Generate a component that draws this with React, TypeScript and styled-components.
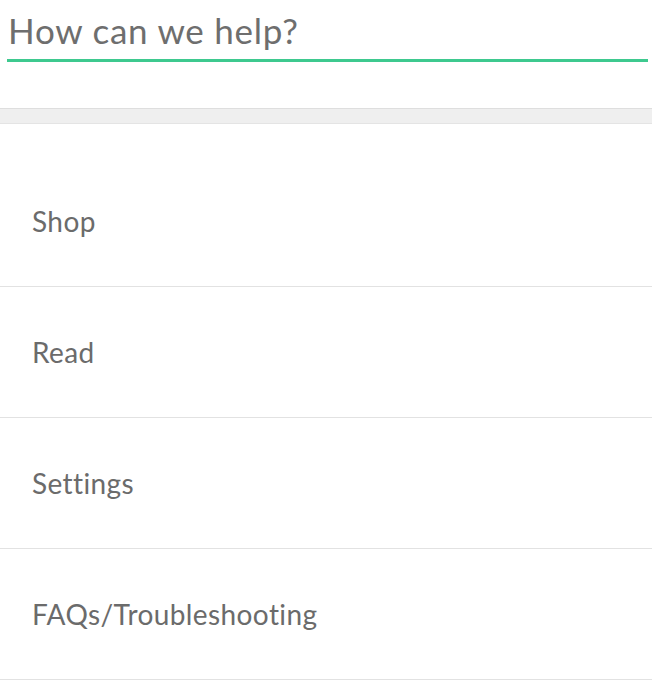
import React from "react";
import styled, { createGlobalStyle } from "styled-components";

const Global = createGlobalStyle`
  html, body { margin: 0; padding: 0; background: #ffffff; }
  body { font-family: Lato, "Open Sans", sans-serif; }
`;

const Page = styled.div`
  width: 652px;
  display: flex;
  flex-direction: column;
`;

const SearchBar = styled.div`
  padding: 10px 4px 0 7px;
  height: 108px;
  box-sizing: border-box;
`;

const SearchInput = styled.input`
  display: block;
  width: 100%;
  box-sizing: border-box;
  border: none;
  border-bottom: 3px solid #3ec98f;
  outline: none;
  background: transparent;
  padding: 0 0 9px 1px;
  margin: 0;
  font-family: Lato, sans-serif;
  font-size: 35px;
  letter-spacing: 0.75px;
  line-height: 40px;
  color: #6e6e6e;
  &::placeholder { color: #6e6e6e; opacity: 1; }
`;

const Divider = styled.div`
  height: 14px;
  background: #efefef;
  border-top: 1px solid #dedede;
  border-bottom: 1px solid #e4e4e4;
`;

const List = styled.ul`
  list-style: none;
  margin: 0;
  padding: 32px 0 0;
`;

const Item = styled.li`
  height: 129px;
  display: flex;
  align-items: center;
  padding-left: 32px;
  border-bottom: 1px solid #e2e2e2;
  font-size: 28px;
  letter-spacing: 0.4px;
  color: #6b6b6b;
  padding-bottom: 1px;
  box-sizing: content-box;
`;

const items = ["Shop", "Read", "Settings", "FAQs/Troubleshooting"];

export default function App() {
  return (
    <Page>
      <Global />
      <SearchBar>
        <SearchInput placeholder="How can we help?" />
      </SearchBar>
      <Divider />
      <List>
        {items.map((t) => (
          <Item key={t}>{t}</Item>
        ))}
      </List>
    </Page>
  );
}
